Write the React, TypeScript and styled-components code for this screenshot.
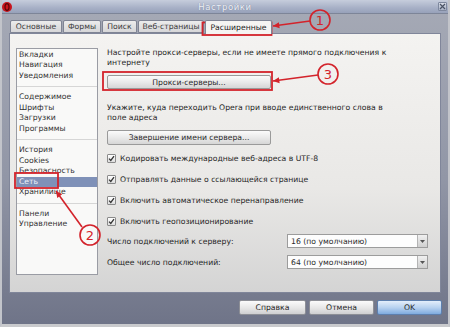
import { createGlobalStyle } from 'styled-components';
import styled from 'styled-components';

const GlobalStyle = createGlobalStyle`
  html, body {
    margin: 0;
    padding: 0;
    background: #fff;
  }
  body {
    font-family: 'DejaVu Sans', 'Liberation Sans', sans-serif;
  }
`;

const RED = '#d3232b';
const FS = '7.7px';

const Window = styled.div`
  position: relative;
  width: 450px;
  height: 327px;
  box-sizing: border-box;
  display: flex;
  flex-direction: column;
  background: linear-gradient(180deg, #a6aab6 0%, #9196a6 55%, #6f7488 100%);
  border-left: 2px solid #c2c4ca;
  border-right: 2px solid #c2c4ca;
  border-bottom: 3px solid #c9cacd;
  overflow: hidden;
`;

const TitleBar = styled.div`
  position: relative;
  height: 13px;
  flex: none;
  display: flex;
  align-items: center;
  justify-content: center;
  background: linear-gradient(180deg, #c6cddc 0%, #a7b0c6 60%, #97a1b9 100%);
  border-bottom: 1px solid #7d8598;
  margin: 0 -2px;
`;

const Title = styled.span`
  font-size: 8.5px;
  letter-spacing: 0.6px;
  color: #eef1f7;
  text-shadow: 0 0 1px #6d7690;
`;

const TitleIcon = styled.svg`
  position: absolute;
  left: 1px;
  top: 1px;
`;

const CloseBox = styled.div`
  position: absolute;
  right: 3px;
  top: 2px;
  width: 9px;
  height: 9px;
  box-sizing: border-box;
  border: 1px solid #7e889e;
  border-radius: 1px;
  background: linear-gradient(180deg, #d8dde8, #a9b2c6);
  display: flex;
  align-items: center;
  justify-content: center;
`;

const Body = styled.div`
  flex: 1;
  display: flex;
  flex-direction: column;
  padding: 6px 7px 0 7px;
`;

const TabsRow = styled.div`
  display: flex;
  align-items: flex-end;
  gap: 1px;
  height: 13px;
  padding-left: 1px;
`;

const Tab = styled.div<{ $active?: boolean; $w: number }>`
  box-sizing: border-box;
  height: ${p => (p.$active ? '14px' : '13px')};
  margin-bottom: ${p => (p.$active ? '-1px' : '0')};
  width: ${p => p.$w}px;
  display: flex;
  align-items: center;
  justify-content: center;
  font-size: ${FS};
  color: ${p => (p.$active ? '#222' : '#3c3c3c')};
  border: 1px solid #7f8494;
  border-bottom: ${p => (p.$active ? 'none' : '1px solid #7f8494')};
  border-radius: 2px 2px 0 0;
  background: ${p =>
    p.$active ? '#f5f4f2' : 'linear-gradient(180deg, #ececec 0%, #d6d6d8 100%)'};
  z-index: ${p => (p.$active ? 1 : 0)};
`;

const Panel = styled.div`
  height: 260px;
  box-sizing: border-box;
  display: flex;
  gap: 9px;
  padding: 14px 14px 0 6px;
  background: linear-gradient(180deg, #f4f3f1 0%, #e9e8e6 60%, #d4d4d4 100%);
  border: 1px solid #80869a;
`;

const Sidebar = styled.div`
  width: 82px;
  height: 227px;
  flex: none;
  box-sizing: border-box;
  background: #f9f9f8;
  border: 1px solid #9a9ca4;
  padding-top: 0.5px;
`;

const NavItem = styled.div<{ $selected?: boolean }>`
  height: 10.5px;
  line-height: 10.5px;
  font-size: ${FS};
  padding-left: 2px;
  color: ${p => (p.$selected ? '#eef2fa' : '#333')};
  background: ${p => (p.$selected ? '#7f91b8' : 'transparent')};
  white-space: nowrap;
`;

const NavSeparator = styled.div`
  height: 1px;
  margin: 5px 0;
  background: #d6d6d6;
`;

const Content = styled.div`
  flex: 1;
  display: flex;
  flex-direction: column;
`;

const Paragraph = styled.p<{ $mt?: number }>`
  margin: ${p => p.$mt ?? 0}px 0 0 0;
  font-size: ${FS};
  line-height: 9.5px;
  color: #262626;
`;

const PushButton = styled.div<{ $mt?: number; $h?: number }>`
  margin-top: ${p => p.$mt ?? 0}px;
  width: 164px;
  height: ${p => p.$h ?? 15}px;
  box-sizing: border-box;
  display: flex;
  align-items: center;
  justify-content: center;
  font-size: ${FS};
  color: #2a2a2a;
  border: 1px solid #9a9a9a;
  border-radius: 2px;
  background: linear-gradient(180deg, #fbfbfb 0%, #e8e8e8 55%, #d6d6d6 100%);
`;

const CheckList = styled.div`
  margin-top: 6.5px;
  display: flex;
  flex-direction: column;
  gap: 8px;
`;

const CheckRow = styled.div`
  height: 13px;
  display: flex;
  align-items: center;
  gap: 4px;
  font-size: ${FS};
  color: #262626;
`;

const CheckBox = styled.span`
  width: 9px;
  height: 9px;
  box-sizing: border-box;
  border: 1px solid #8a8a8a;
  border-radius: 1px;
  background: linear-gradient(180deg, #ffffff, #dedede);
  display: flex;
  align-items: center;
  justify-content: center;
`;

const SelectGrid = styled.div`
  margin-top: 6.5px;
  display: grid;
  grid-template-columns: 180px 141px;
  row-gap: 7px;
  align-items: center;
`;

const SelectLabel = styled.span`
  font-size: ${FS};
  color: #262626;
`;

const SelectBox = styled.div`
  height: 14px;
  box-sizing: border-box;
  display: flex;
  border: 1px solid #9c9c9c;
  background: #fdfdfd;
  font-size: ${FS};
  color: #2a2a2a;
`;

const SelectValue = styled.span`
  flex: 1;
  display: flex;
  align-items: center;
  padding-left: 3px;
`;

const SelectArrow = styled.span`
  width: 9px;
  display: flex;
  align-items: center;
  justify-content: center;
  border-left: 1px solid #b4b4b4;
  background: linear-gradient(180deg, #f0f0f0, #cfcfcf);
`;

const Footer = styled.div`
  display: flex;
  justify-content: flex-end;
  gap: 3px;
  padding-top: 7px;
  margin-right: -1px;
`;

const DialogButton = styled.div<{ $primary?: boolean; $w: number }>`
  width: ${p => p.$w}px;
  height: 15px;
  box-sizing: border-box;
  display: flex;
  align-items: center;
  justify-content: center;
  font-size: ${FS};
  color: #262626;
  border: 1px solid ${p => (p.$primary ? '#5d7fae' : '#8d8f96')};
  border-radius: 2px;
  background: ${p =>
    p.$primary
      ? 'linear-gradient(180deg, #e3eefb 0%, #b8d2f0 50%, #7fabdf 100%)'
      : 'linear-gradient(180deg, #fbfbfb 0%, #e6e6e6 55%, #cfcfd1 100%)'};
`;

const Overlay = styled.svg`
  position: absolute;
  left: -2px;
  top: 0;
  pointer-events: none;
`;

const tabs = [
  { label: 'Основные', w: 52 },
  { label: 'Формы', w: 38 },
  { label: 'Поиск', w: 35 },
  { label: 'Веб-страницы', w: 66 },
  { label: 'Расширенные', w: 67, active: true },
];

const navGroups = [
  ['Вкладки', 'Навигация', 'Уведомления'],
  ['Содержимое', 'Шрифты', 'Загрузки', 'Программы'],
  ['История', 'Cookies', 'Безопасность', 'Сеть', 'Хранилище'],
  ['Панели', 'Управление'],
];

const checks = [
  'Кодировать международные веб-адреса в UTF-8',
  'Отправлять данные о ссылающейся странице',
  'Включить автоматическое перенаправление',
  'Включить геопозиционирование',
];

const selects = [
  { label: 'Число подключений к серверу:', value: '16 (по умолчанию)' },
  { label: 'Общее число подключений:', value: '64 (по умолчанию)' },
];

const Marker = ({ cx, cy, n }: { cx: number; cy: number; n: string }) => (
  <g>
    <circle cx={cx} cy={cy} r={10} fill="none" stroke={RED} strokeWidth={1.6} />
    <text
      x={cx}
      y={cy + 4.5}
      textAnchor="middle"
      fontSize={13}
      fontFamily="'DejaVu Sans', sans-serif"
      fill={RED}
    >
      {n}
    </text>
  </g>
);

const Arrow = ({ x1, y1, x2, y2 }: { x1: number; y1: number; x2: number; y2: number }) => {
  const a = Math.atan2(y2 - y1, x2 - x1);
  const len = 7;
  const spread = 0.45;
  const p1 = [x2 - len * Math.cos(a - spread), y2 - len * Math.sin(a - spread)];
  const p2 = [x2 - len * Math.cos(a + spread), y2 - len * Math.sin(a + spread)];
  return (
    <g>
      <line x1={x1} y1={y1} x2={x2} y2={y2} stroke={RED} strokeWidth={1.6} />
      <polygon points={`${x2},${y2} ${p1[0]},${p1[1]} ${p2[0]},${p2[1]}`} fill={RED} />
    </g>
  );
};

export default function App() {
  return (
    <>
      <GlobalStyle />
      <Window>
        <TitleBar>
          <TitleIcon width="12" height="12" viewBox="0 0 12 12">
            <circle cx="6" cy="6" r="5" fill="#c8141c" />
            <ellipse cx="6" cy="6" rx="2" ry="3.3" fill="none" stroke="#5a0508" strokeWidth="1.2" />
          </TitleIcon>
          <Title>Настройки</Title>
          <CloseBox>
            <svg width="7" height="7" viewBox="0 0 7 7">
              <path d="M1 1 L6 6 M6 1 L1 6" stroke="#4a5366" strokeWidth="1.2" />
            </svg>
          </CloseBox>
        </TitleBar>
        <Body>
          <TabsRow>
            {tabs.map(t => (
              <Tab key={t.label} $active={t.active} $w={t.w}>
                {t.label}
              </Tab>
            ))}
          </TabsRow>
          <Panel>
            <Sidebar>
              {navGroups.map((group, gi) => (
                <div key={gi}>
                  {gi > 0 && <NavSeparator />}
                  {group.map(item => (
                    <NavItem key={item} $selected={item === 'Сеть'}>
                      {item}
                    </NavItem>
                  ))}
                </div>
              ))}
            </Sidebar>
            <Content>
              <Paragraph>
                Настройте прокси-серверы, если не имеете прямого подключения к
                <br />
                интернету
              </Paragraph>
              <PushButton $mt={8} $h={14}>Прокси-серверы...</PushButton>
              <Paragraph $mt={14}>
                Укажите, куда переходить Opera при вводе единственного слова в
                <br />
                поле адреса
              </Paragraph>
              <PushButton $mt={8}>Завершение имени сервера...</PushButton>
              <CheckList>
                {checks.map(c => (
                  <CheckRow key={c}>
                    <CheckBox>
                      <svg width="7" height="7" viewBox="0 0 7 7">
                        <path d="M1 3.6 L2.8 5.4 L6 1.2" fill="none" stroke="#333" strokeWidth="1.3" />
                      </svg>
                    </CheckBox>
                    {c}
                  </CheckRow>
                ))}
              </CheckList>
              <SelectGrid>
                {selects.map(s => [
                  <SelectLabel key={s.label}>{s.label}</SelectLabel>,
                  <SelectBox key={s.value + s.label}>
                    <SelectValue>{s.value}</SelectValue>
                    <SelectArrow>
                      <svg width="5" height="3" viewBox="0 0 5 3">
                        <path d="M0 0 H5 L2.5 3 Z" fill="#555" />
                      </svg>
                    </SelectArrow>
                  </SelectBox>,
                ])}
              </SelectGrid>
            </Content>
          </Panel>
          <Footer>
            <DialogButton $w={67}>Справка</DialogButton>
            <DialogButton $w={65}>Отмена</DialogButton>
            <DialogButton $w={65} $primary>OK</DialogButton>
          </Footer>
        </Body>
        <Overlay width="450" height="327" viewBox="0 0 450 327">
          <rect x="202.5" y="22.5" width="69" height="12.5" fill="none" stroke={RED} strokeWidth="1.8" />
          <rect x="15" y="173" width="43" height="15" fill="none" stroke={RED} strokeWidth="1.8" />
          <rect x="103" y="72" width="169" height="18" fill="none" stroke={RED} strokeWidth="1.8" />
          <Arrow x1={310} y1={21} x2={273} y2={26} />
          <Arrow x1={318} y1={75} x2={273} y2={81} />
          <Arrow x1={82} y1={227} x2={56} y2={191} />
          <Marker cx={320} cy={20} n="1" />
          <Marker cx={328} cy={74} n="3" />
          <Marker cx={90} cy={235} n="2" />
        </Overlay>
      </Window>
    </>
  );
}
